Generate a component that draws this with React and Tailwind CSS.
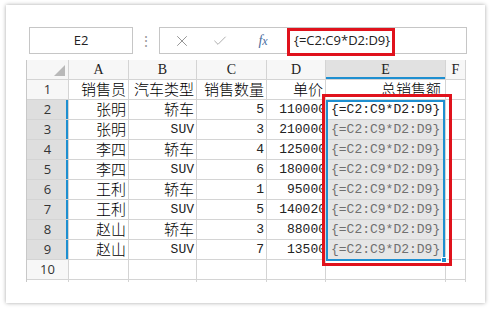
import { X, Check } from 'lucide-react'

const ROWS = [
  ['张明', '轿车', '5', '110000'],
  ['张明', 'SUV', '3', '210000'],
  ['李四', '轿车', '4', '125000'],
  ['李四', 'SUV', '6', '180000'],
  ['王利', '轿车', '1', '95000'],
  ['王利', 'SUV', '5', '140020'],
  ['赵山', '轿车', '3', '88000'],
  ['赵山', 'SUV', '7', '13500'],
]

const COLS = ['A', 'B', 'C', 'D', 'E', 'F']
const CJK = { fontFamily: '"Noto Sans CJK SC", sans-serif' }
const MONO = { fontFamily: '"Liberation Mono", "Noto Sans CJK SC", monospace' }
const SERIF = { fontFamily: '"Liberation Serif", serif' }
const SANS = { fontFamily: '"Open Sans", "Liberation Sans", sans-serif' }

function Cell({ children, className = '', style }) {
  return (
    <div
      style={style}
      className={`h-[20px] border-r border-b border-[#d4d4d4] overflow-hidden whitespace-nowrap flex items-center ${className}`}
    >
      {children}
    </div>
  )
}

function FormulaBar() {
  return (
    <div className="relative flex items-stretch h-[27px] ml-[3px]">
      <div style={SANS} className="w-[104px] border border-[#c6c6c6] bg-white flex items-center justify-center text-[13px] text-[#222]">
        E2
      </div>
      <div className="w-[26px] flex items-center justify-center text-[#9a9a9a] text-[14px] leading-none">⋮</div>
      <div className="flex-1 border border-[#c6c6c6] bg-white flex items-center">
        <div className="w-[44px] flex justify-center text-[#8a8a8a]"><X size={18} strokeWidth={1.2} /></div>
        <div className="w-[32px] flex justify-center text-[#a0a0a0]"><Check size={16} strokeWidth={1.3} /></div>
        <div className="w-[54px] flex justify-center">
          <span className="text-[14px] italic text-[#4a6ea0]" style={SERIF}>f<span className="text-[12px]">x</span></span>
        </div>
        <span style={SANS} className="ml-[4px] text-[13px] text-[#222]">{'{=C2:C9*D2:D9}'}</span>
      </div>
      <div className="absolute left-[258px] top-[1px] w-[108px] h-[28px] border-[3px] border-[#e0121c]" />
    </div>
  )
}

function Row({ n, r, first }) {
  const suv = r[1] === 'SUV'
  return (
    <>
      <Cell style={SANS} className="bg-[#dedede] justify-center text-[13px] text-[#333] shadow-[inset_-2px_0_0_#1e8fd0]">{n}</Cell>
      <Cell style={CJK} className="justify-end pr-[2px] text-[15px] font-light text-black">{r[0]}</Cell>
      <Cell style={suv ? MONO : CJK} className={`justify-end pr-[2px] ${suv ? 'text-[13px] text-[#222]' : 'text-[15px] font-light text-black'}`}>{r[1]}</Cell>
      <Cell style={MONO} className="justify-end pr-[2px] text-[13px] text-[#222]">{r[2]}</Cell>
      <Cell style={MONO} className="justify-end text-[13px] text-[#222]">
        <span className="mr-[-1px]">{r[3]}</span>
      </Cell>
      <Cell style={MONO} className={`pl-[5px] text-[13px] ${first ? 'bg-white text-[#222]' : 'bg-[#e6e6e6] text-[#707070]'}`}>
        {'{=C2:C9*D2:D9}'}
      </Cell>
      <Cell />
    </>
  )
}

function Grid() {
  return (
    <div className="relative mt-[6px] border-l border-[#c8c8c8]">
      <div className="grid grid-cols-[42px_60px_68px_70px_59px_120px_20px]">
        <Cell className="bg-[#f7f7f7] relative">
          <div className="absolute right-[3px] bottom-[3px] w-0 h-0 border-l-[11px] border-l-transparent border-b-[11px] border-b-[#b9b9b9]" />
        </Cell>
        {COLS.map((c) => (
          <Cell
            key={c}
            style={SERIF}
            className={`justify-center text-[14px] text-[#222] ${c === 'E' ? 'bg-[#e1e1e1] shadow-[inset_0_-2px_0_#1e8fd0]' : 'bg-[#f7f7f7]'}`}
          >
            {c}
          </Cell>
        ))}

        <Cell style={SANS} className="bg-[#f7f7f7] justify-center text-[13px] text-[#333]">1</Cell>
        <Cell style={CJK} className="justify-end pr-[2px] text-[15px] font-light text-black">销售员</Cell>
        <Cell style={CJK} className="justify-end pr-[2px] text-[15px] font-light text-black">汽车类型</Cell>
        <Cell style={CJK} className="justify-end pr-[2px] text-[15px] font-light text-black">销售数量</Cell>
        <Cell style={CJK} className="justify-end pr-[2px] text-[15px] font-light text-black">单价</Cell>
        <Cell style={CJK} className="justify-end pr-[4px] text-[15px] font-light text-black">总销售额</Cell>
        <Cell />

        {ROWS.map((r, i) => (
          <Row key={i} n={i + 2} r={r} first={i === 0} />
        ))}

        <Cell style={SANS} className="bg-[#f7f7f7] justify-center text-[13px] text-[#333]">10</Cell>
        <Cell /><Cell /><Cell /><Cell /><Cell /><Cell />
        {[0, 1, 2, 3, 4, 5, 6].map((k) => (
          <div key={k} className="h-[2px] border-r border-[#d4d4d4]" />
        ))}
      </div>

      {/* selection E2:E9 */}
      <div className="absolute left-[299px] top-[40px] w-[119px] h-[161px] border-2 border-[#1e8fd0] pointer-events-none">
        <div className="absolute right-[-4px] bottom-[-4px] w-[6px] h-[6px] bg-[#1e8fd0] border border-white" />
      </div>
      {/* red highlight */}
      <div className="absolute left-[295px] top-[34px] w-[130px] h-[172px] border-[3px] border-[#e0121c] pointer-events-none" />
    </div>
  )
}

export default function App() {
  return (
    <div className="w-[492px] h-[309px] bg-white pt-[5px] pl-[6px]">
      <div className="w-[479px] h-[298px] bg-white shadow-[0_0_4px_rgba(0,0,0,0.35)] pt-[22px] pl-[20px]">
        <div className="w-[441px]">
          <FormulaBar />
          <Grid />
        </div>
      </div>
    </div>
  )
}
